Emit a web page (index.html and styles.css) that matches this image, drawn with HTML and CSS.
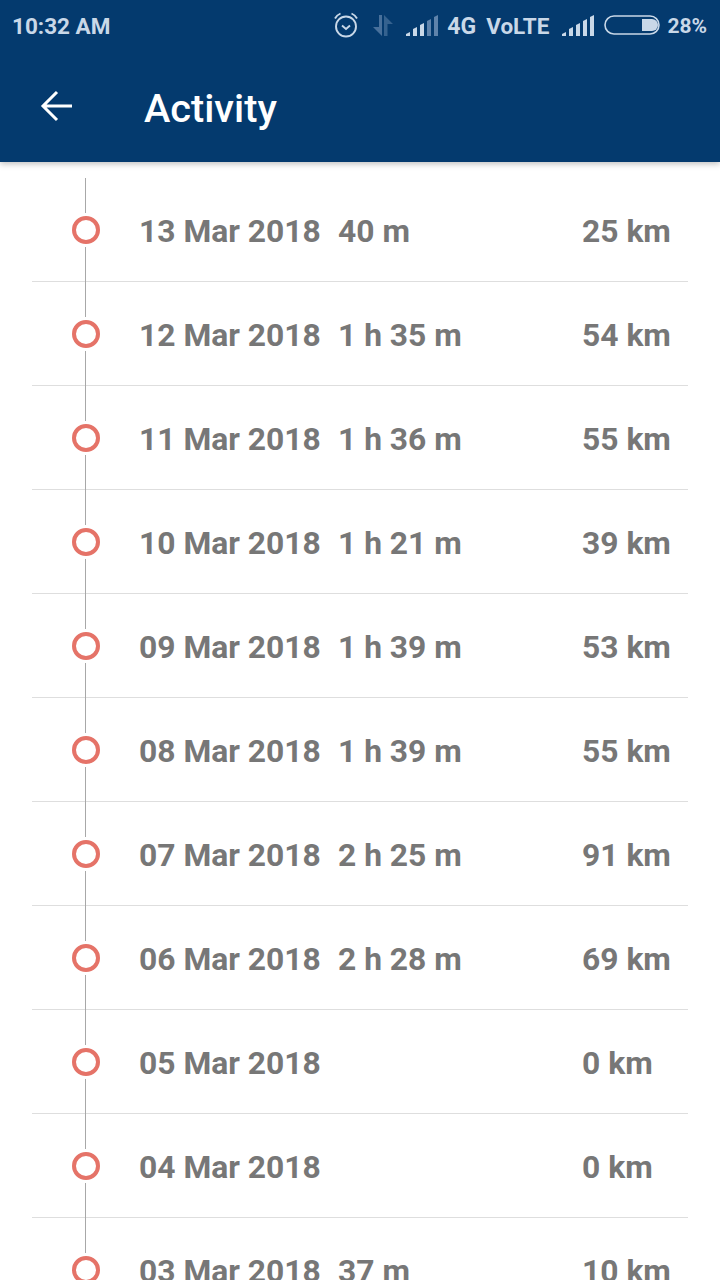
FILE: index.html
```html
<!DOCTYPE html>
<html>
<head>
<meta charset="utf-8">
<title>Activity</title>
<link rel="stylesheet" href="styles.css">
</head>

<body>
    <!-- ========================= Header ========================== -->
    <div class="header">
        <div class="status">
            <span class="time">10:32 AM</span>
            <div class="status-right">
                <svg class="alarm" width="26" height="26" viewBox="0 0 26 26" fill="none" stroke="#c9d8e8" stroke-width="1.9">
                    <circle cx="13" cy="14.5" r="10"/>
                    <path d="M9 13.500l4 3.500 4-3.500"/>
                    <path d="M2 6.500Q4 3 7.500 1.500M24 6.500Q22 3 18.500 1.500"/>
                </svg>
                <svg class="arrows" width="22" height="22" viewBox="0 0 22 22" fill="#5f83ab">
                    <path d="M7 0h3v21L1 12h6z" opacity=".75"/>
                    <path d="M12 0l9 9h-5.500v12H12z" opacity=".55"/>
                </svg>
                <svg class="signal" width="32" height="22" viewBox="0 0 32 22">
                    <path d="M0 21v-2l4-2v4zM7 21v-7l4-2v9z" fill="#c9d8e8"/>
                    <path d="M14 21V10l4-2v13z" fill="#c9d8e8"/>
                    <path d="M21 21V6l4-2v17zM28 21V2l4-2v21z" fill="#5f83ab"/>
                </svg>
                <span class="net">4G</span>
                <span class="net volte">VoLTE</span>
                <svg class="signal two" width="32" height="22" viewBox="0 0 32 22" fill="#c9d8e8">
                    <path d="M0 21v-2l4-2v4zM7 21v-7l4-2v9zM14 21V10l4-2v13zM21 21V6l4-2v17zM28 21V2l4-2v21z"/>
                </svg>
                <svg class="battery" width="56" height="20" viewBox="0 0 56 20">
                    <rect x="1" y="1" width="54" height="18" rx="9" fill="none" stroke="#c9d8e8" stroke-width="1.600"/>
                    <path d="M38 4h10a6 6 0 0 1 0 12H38z" fill="#c9d8e8"/>
                </svg>
                <span class="percent">28%</span>
            </div>
        </div>
        <div class="toolbar">
            <svg class="back" width="32" height="32" viewBox="0 0 32 32" fill="none" stroke="#fff" stroke-width="3">
                <path d="M32 16H3M17 2L3 16l14 14"/>
            </svg>
            <h1>Activity</h1>
        </div>
    </div>

    <!-- ========================= Activity list ========================== -->
    <div class="list">
        <div class="row">
            <div class="rail"><span class="seg"></span><span class="dot"></span><span class="seg"></span></div>
            <span class="date">13 Mar 2018</span><span class="time-spent">40 m</span><span class="dist">25 km</span>
        </div>
        <div class="row">
            <div class="rail"><span class="seg"></span><span class="dot"></span><span class="seg"></span></div>
            <span class="date">12 Mar 2018</span><span class="time-spent">1 h 35 m</span><span class="dist">54 km</span>
        </div>
        <div class="row">
            <div class="rail"><span class="seg"></span><span class="dot"></span><span class="seg"></span></div>
            <span class="date">11 Mar 2018</span><span class="time-spent">1 h 36 m</span><span class="dist">55 km</span>
        </div>
        <div class="row">
            <div class="rail"><span class="seg"></span><span class="dot"></span><span class="seg"></span></div>
            <span class="date">10 Mar 2018</span><span class="time-spent">1 h 21 m</span><span class="dist">39 km</span>
        </div>
        <div class="row">
            <div class="rail"><span class="seg"></span><span class="dot"></span><span class="seg"></span></div>
            <span class="date">09 Mar 2018</span><span class="time-spent">1 h 39 m</span><span class="dist">53 km</span>
        </div>
        <div class="row">
            <div class="rail"><span class="seg"></span><span class="dot"></span><span class="seg"></span></div>
            <span class="date">08 Mar 2018</span><span class="time-spent">1 h 39 m</span><span class="dist">55 km</span>
        </div>
        <div class="row">
            <div class="rail"><span class="seg"></span><span class="dot"></span><span class="seg"></span></div>
            <span class="date">07 Mar 2018</span><span class="time-spent">2 h 25 m</span><span class="dist">91 km</span>
        </div>
        <div class="row">
            <div class="rail"><span class="seg"></span><span class="dot"></span><span class="seg"></span></div>
            <span class="date">06 Mar 2018</span><span class="time-spent">2 h 28 m</span><span class="dist">69 km</span>
        </div>
        <div class="row">
            <div class="rail"><span class="seg"></span><span class="dot"></span><span class="seg"></span></div>
            <span class="date">05 Mar 2018</span><span class="time-spent"></span><span class="dist">0 km</span>
        </div>
        <div class="row">
            <div class="rail"><span class="seg"></span><span class="dot"></span><span class="seg"></span></div>
            <span class="date">04 Mar 2018</span><span class="time-spent"></span><span class="dist">0 km</span>
        </div>
        <div class="row">
            <div class="rail"><span class="seg"></span><span class="dot"></span><span class="seg"></span></div>
            <span class="date">03 Mar 2018</span><span class="time-spent">37 m</span><span class="dist">10 km</span>
        </div>
    </div>
</body>

</html>
```
FILE: styles.css
```css
* {
    margin: 0;
    padding: 0;
    box-sizing: border-box;
}

html, body {
    height: 1280px;
    overflow: hidden;
}

body {
    background-color: #fff;
    font-family: Roboto, "Liberation Sans", sans-serif;
}

.header {
    height: 162px;
    background-color: #043a6e;
    box-shadow: 0 2px 6px rgba(0, 0, 0, 0.25);
}

.status {
    display: flex;
    justify-content: space-between;
    align-items: center;
    height: 54px;
    padding: 0 13px 2px 12px;
    color: #c9d8e8;
    font-weight: 700;
}

.time {
    font-size: 22.5px;
}

.status-right {
    display: flex;
    align-items: center;
}

.alarm {
    margin: -2px 13px 0 0;
}

.arrows {
    margin-right: 12px;
}

.net {
    font-size: 23px;
    margin-left: 9px;
}

.net.volte {
    font-size: 22.5px;
    margin-left: 10px;
}

.signal.two {
    margin-left: 13px;
}

.battery {
    margin: -2px 0 0 10px;
}

.percent {
    font-size: 21px;
    margin-left: 7px;
}

.toolbar {
    display: flex;
    align-items: center;
    height: 108px;
    padding-left: 40px;
}

.back {
    margin: -4px 72px 0 0;
}

h1 {
    color: #fff;
    font-size: 39.7px;
    font-weight: 500;
}

.list {
    padding-top: 16px;
}

.row {
    display: flex;
    align-items: center;
    height: 104px;
    margin: 0 32px;
    border-bottom: 1px solid #dedede;
    color: #777;
    font-size: 31.8px;
    font-weight: 700;
}

.rail {
    display: flex;
    flex-direction: column;
    align-items: center;
    align-self: stretch;
    width: 28px;
    margin: 0 39px -1px 40px;
}

.seg {
    flex: 1;
    width: 1px;
    margin-right: 1px;
    background-color: #a8a8a8;
}

.dot {
    width: 28px;
    height: 28px;
    margin: 3px 0;
    border: 4px solid #e57368;
    border-radius: 50%;
}

.date {
    width: 199px;
    padding-top: 2px;
}

.time-spent {
    width: 244px;
    padding-top: 2px;
}

.dist {
    padding-top: 2px;
}
```
